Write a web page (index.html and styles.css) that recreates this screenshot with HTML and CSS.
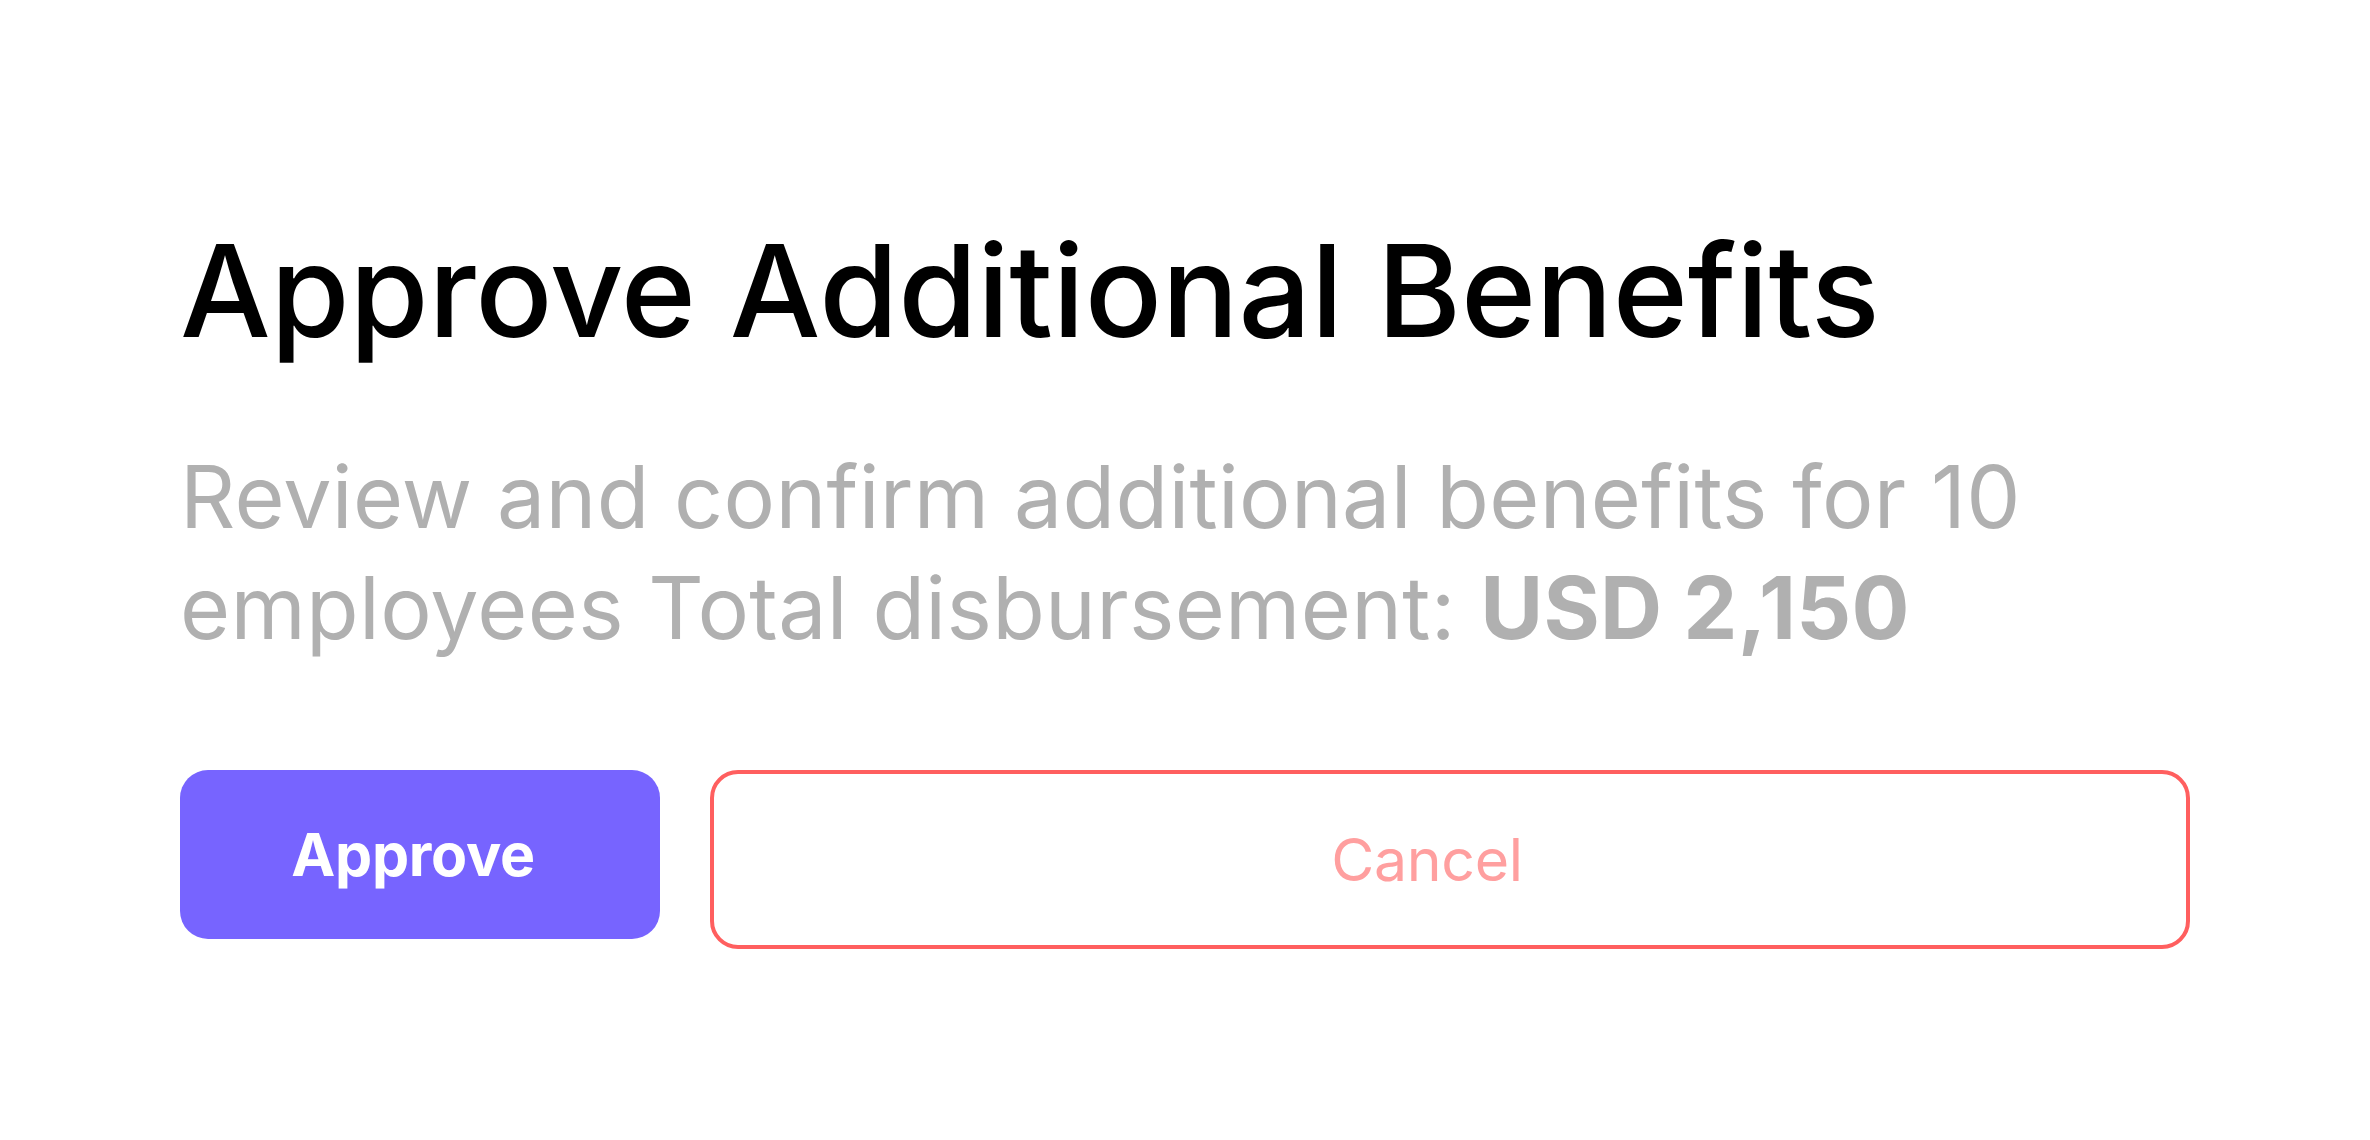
FILE: index.html
```html
<!DOCTYPE html>
<html lang="en">
<head>
<meta charset="utf-8">
<title>Approve Additional Benefits</title>
<link rel="stylesheet" href="styles.css">
</head>
<body>
<main class="dialog">
  <h1 class="title">Approve Additional Benefits</h1>
  <p class="desc">Review and confirm additional benefits for 10 employees Total disbursement: <strong class="amount">USD 2,150</strong></p>
  <div class="actions">
    <button class="btn btn-approve" type="button">Approve</button>
    <button class="btn btn-cancel" type="button">Cancel</button>
  </div>
</main>
</body>
</html>
```

FILE: styles.css
```css
html, body {
  margin: 0;
  padding: 0;
  background: #ffffff;
}

body {
  font-family: Inter, "Noto Sans", "Liberation Sans", sans-serif;
}

.dialog {
  width: 2010px;
  padding: 216px 0 0 180px;
  display: flex;
  flex-direction: column;
  align-items: flex-start;
}

.title {
  margin: 0;
  font-size: 128px;
  font-weight: 500;
  line-height: 150px;
  letter-spacing: -0.2px;
  color: #000000;
}

.desc {
  margin: 76px 0 0 0;
  font-size: 86px;
  font-weight: 400;
  line-height: 111px;
  letter-spacing: 0.3px;
  color: #b0b0b0;
}

.amount {
  font-weight: 700;
}

.actions {
  margin-top: 106px;
  display: flex;
  align-items: flex-start;
  gap: 50px;
  width: 2010px;
}

.btn {
  font-family: Inter, "Noto Sans", "Liberation Sans", sans-serif;
  font-size: 59px;
  letter-spacing: -0.3px;
  border-radius: 28px;
  cursor: pointer;
  display: flex;
  align-items: center;
  justify-content: center;
  padding: 0;
}

.btn-approve {
  width: 480px;
  height: 169px;
  padding-right: 14px;
  background: #7764ff;
  color: #ffffff;
  font-weight: 700;
  border: none;
}

.btn-cancel {
  flex: 1;
  height: 179px;
  padding-right: 46px;
  background: #ffffff;
  color: #ff9f9f;
  font-weight: 400;
  border: 4px solid #ff5f5f;
}
```
